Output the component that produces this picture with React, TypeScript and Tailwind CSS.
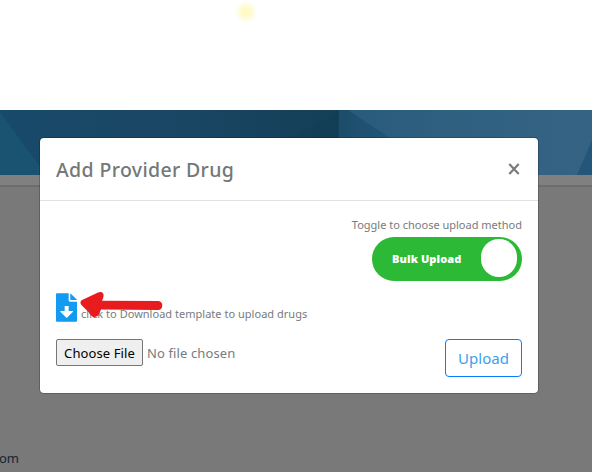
function Banner() {
  return (
    <svg className="block h-[65px] w-full shrink-0" viewBox="0 0 592 65" preserveAspectRatio="none">
      <defs>
        <linearGradient id="deep" x1="0" x2="1">
          <stop offset="0" stopColor="#194a6b" />
          <stop offset="0.55" stopColor="#194663" />
          <stop offset="1" stopColor="#133f57" />
        </linearGradient>
        <linearGradient id="light" x1="0" x2="1">
          <stop offset="0" stopColor="#285a7d" />
          <stop offset="0.4" stopColor="#2f6080" />
          <stop offset="1" stopColor="#356384" />
        </linearGradient>
        <linearGradient id="fold" x1="0" x2="1">
          <stop offset="0" stopColor="#1c4c69" />
          <stop offset="0.3" stopColor="#205171" />
          <stop offset="1" stopColor="#235779" />
        </linearGradient>
      </defs>
      <rect width="339" height="65" fill="url(#deep)" />
      <path d="M0 2L46 65H0Z" fill="#1a5272" />
      <path d="M292 28L340 0V65H292Z" fill="#123c53" opacity=".35" />
      <rect x="339" width="253" height="65" fill="url(#light)" />
      <path d="M339 0H348L420 48V65H338Z" fill="url(#fold)" />
      <path d="M592 30V65H577Z" fill="#235679" />
    </svg>
  );
}

function FileDownloadIcon() {
  return (
    <svg className="h-[29px] w-[21px] shrink-0" viewBox="0 0 63 87">
      <path d="M3 1H38V22Q38 26 42 26H63V83Q63 86 60 86H3Q0 86 0 83V4Q0 1 3 1Z" fill="#129bf0" />
      <path d="M43 1L63 20V21H43Z" fill="#129bf0" />
      <path d="M26 39H38V54H50Q52 54 51 56L33 74Q32 75 31 74L13 56Q12 54 14 54H26Z" fill="#fff" />
    </svg>
  );
}

function Dialog() {
  return (
    <section className="flex h-[255px] w-[498px] flex-col rounded-[4px] bg-white text-[#777b7e] shadow-[0_0_0_1px_rgba(0,0,0,0.2)]">
      <header className="flex h-[63px] items-center justify-between border-b border-[#dee2e6] px-4">
        <h1 className="pt-[2px] text-[19.5px] leading-[30px] font-medium tracking-[0.35px] whitespace-nowrap text-[#747879]">Add Provider Drug</h1>
        <button className="mr-[2px] flex h-3 w-3 items-center justify-center" aria-label="Close">
          <svg className="h-3 w-3" viewBox="0 0 12 12" stroke="#7b7b7b" strokeWidth="2.2">
            <path d="M1.3 1L10.7 11M10.7 1L1.3 11" />
          </svg>
        </button>
      </header>
      <div className="flex flex-1 flex-col px-4">
        <div className="flex flex-col items-end pt-[16px]">
          <span className="h-5 text-[11px] leading-4 whitespace-nowrap">Toggle to choose upload method</span>
          <div className="flex h-[44px] w-[150px] items-center justify-between rounded-full bg-[#2bb936] pr-[5px] pl-5">
            <span className="text-[11px] font-black tracking-[0.1px] whitespace-nowrap text-white">Bulk Upload</span>
            <span className="mb-[2px] h-[38px] w-[36px] rounded-full bg-white" />
          </div>
        </div>
        <div className="relative mt-3 flex h-[29px] items-start">
          <FileDownloadIcon />
          <span className="mt-[13px] ml-1 text-[11px] leading-4 tracking-[0.02px] whitespace-nowrap">click to Download template to upload drugs</span>
          <svg className="absolute -top-2 left-5 h-[36px] w-[90px]" viewBox="0 0 90 36" fill="#e81c1e">
            <path d="M5.6 15.3L22 7.5Q25.5 6.2 27.2 8.5Q28.4 11 26 15.7L82.5 15.9Q86.3 16.5 86.3 20.2Q86.3 24.5 82.5 25L25 24.5L23.2 29Q21 32.8 17.2 32Q14.5 31 12.5 27L5.4 20Q3.4 17.3 5.6 15.3Z" />
          </svg>
        </div>
        <div className="mt-[17px] flex items-start justify-between">
          <div className="flex items-center gap-1">
            <button className="h-[27px] w-[87px] rounded-[2px] border border-[#767676] bg-[#efefef] pt-[2px] text-[13px] leading-none tracking-[0.1px] whitespace-nowrap text-black">Choose File</button>
            <span className="pt-[2px] text-[13px] tracking-[0.12px] whitespace-nowrap">No file chosen</span>
          </div>
          <button className="h-[38px] w-[77px] rounded-[4px] border border-[#087cff] text-[15px] whitespace-nowrap text-[#3ba1ee]">Upload</button>
        </div>
      </div>
    </section>
  );
}

export default function App() {
  return (
    <main className="relative flex h-[472px] w-[592px] flex-col overflow-hidden bg-[#797979] font-['Noto_Sans','Open_Sans',sans-serif]">
      <div className="flex h-[110px] shrink-0 justify-center bg-white">
        <span className="mt-[4px] mr-[100px] h-4 w-4 rounded-full bg-[#fffac8] blur-[2px]" />
      </div>
      <Banner />
      <div className="h-[12px] shrink-0 border-b-2 border-[#6d6d6d] bg-[#808080]" />
      <div className="flex flex-1 items-end">
        <span className="mb-[5px] -ml-px text-[13px] leading-[18px] text-[#172530]">om</span>
      </div>
      <div className="absolute top-[138px] left-[40px]">
        <Dialog />
      </div>
    </main>
  );
}
